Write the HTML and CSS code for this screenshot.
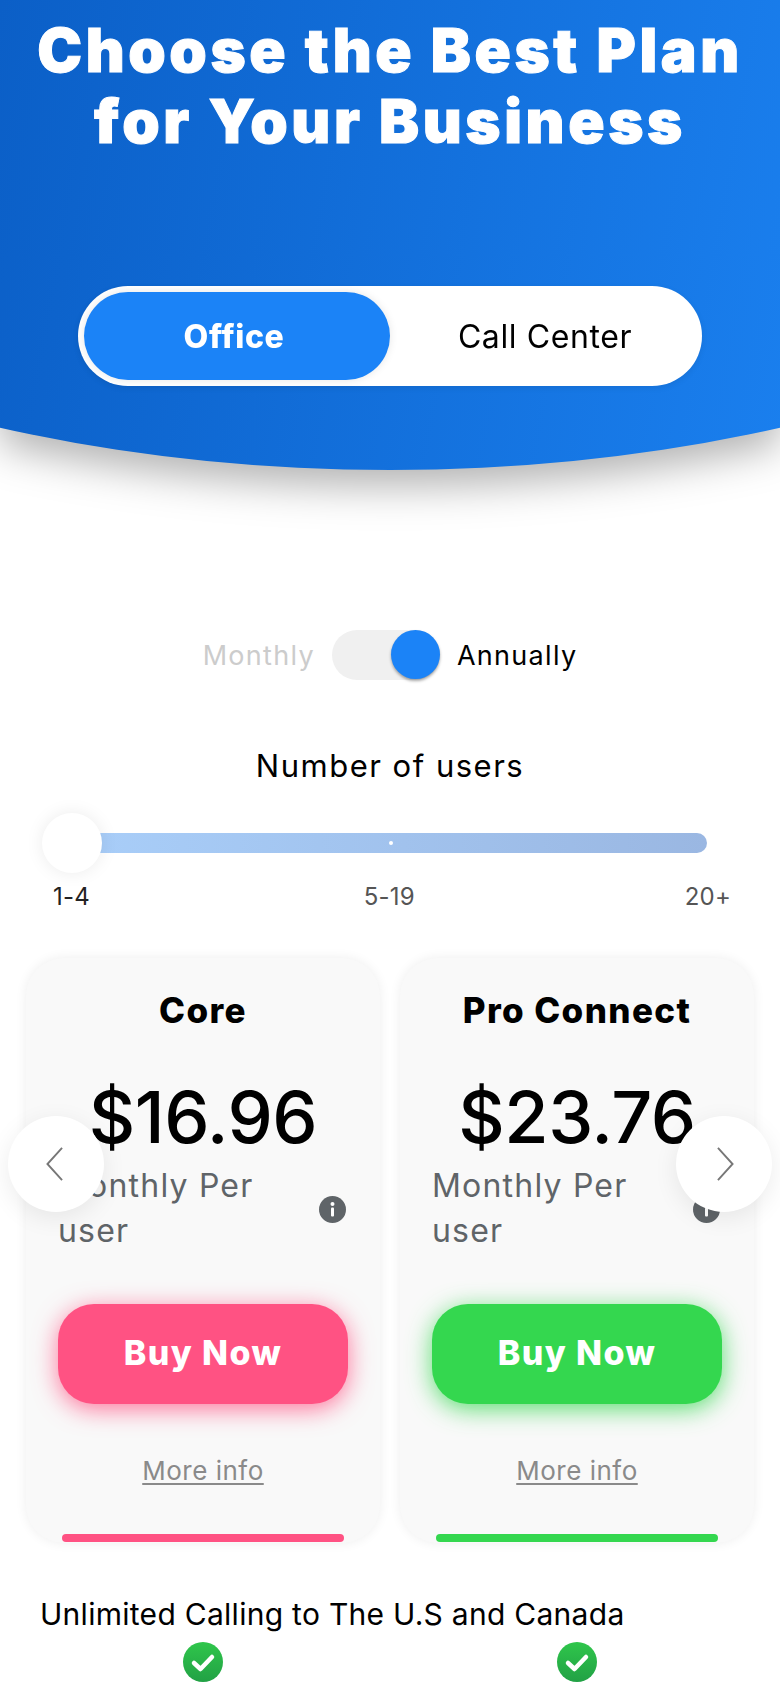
FILE: index.html
```html
<!DOCTYPE html>
<html lang="en">
<head>
<meta charset="utf-8">
<title>Choose the Best Plan</title>
<link rel="stylesheet" href="styles.css">
</head>
<body>
<div class="hero-wrap">
  <header class="hero">
    <h1 class="hero-title">Choose the Best Plan<br>for Your Business</h1>
    <div class="segment">
      <div class="segment-item segment-active">Office</div>
      <div class="segment-item segment-plain">Call Center</div>
    </div>
  </header>
</div>

<div class="billing">
  <span class="billing-off">Monthly</span>
  <div class="switch"><div class="switch-knob"></div></div>
  <span class="billing-on">Annually</span>
</div>

<h2 class="users-title">Number of users</h2>
<div class="slider">
  <div class="slider-track">
    <div class="slider-handle"></div>
    <div class="slider-dot"></div>
  </div>
</div>
<div class="slider-labels">
  <span class="label-first">1-4</span>
  <span>5-19</span>
  <span>20+</span>
</div>

<section class="plans">
  <article class="card">
    <h3 class="card-title">Core</h3>
    <div class="card-price">$16.96</div>
    <div class="card-desc">
      <p class="card-desc-text">Monthly Per user</p>
      <svg class="info" viewBox="0 0 27 27"><circle cx="13.5" cy="13.5" r="13.5" fill="#5f6468"/><circle cx="13.5" cy="8" r="2" fill="#fff"/><rect x="12" y="11.5" width="3" height="9" rx="1" fill="#fff"/></svg>
    </div>
    <a class="buy buy-pink">Buy Now</a>
    <a class="more">More info</a>
    <div class="card-bar bar-pink"></div>
  </article>
  <article class="card">
    <h3 class="card-title">Pro Connect</h3>
    <div class="card-price">$23.76</div>
    <div class="card-desc">
      <p class="card-desc-text">Monthly Per user</p>
      <svg class="info" viewBox="0 0 27 27"><circle cx="13.5" cy="13.5" r="13.5" fill="#5f6468"/><circle cx="13.5" cy="8" r="2" fill="#fff"/><rect x="12" y="11.5" width="3" height="9" rx="1" fill="#fff"/></svg>
    </div>
    <a class="buy buy-green">Buy Now</a>
    <a class="more">More info</a>
    <div class="card-bar bar-green"></div>
  </article>
  <button class="arrow arrow-left" aria-label="Previous">
    <svg viewBox="0 0 18 36" class="arrow-icon"><path d="M17 1 1.5 18 17 35" fill="none" stroke="#777" stroke-width="2"/></svg>
  </button>
  <button class="arrow arrow-right" aria-label="Next">
    <svg viewBox="0 0 18 36" class="arrow-icon"><path d="M1 1 16.500 18 1 35" fill="none" stroke="#777" stroke-width="2"/></svg>
  </button>
</section>

<p class="feature">Unlimited Calling to The U.S and Canada</p>
<div class="feature-checks">
  <svg class="check" viewBox="0 0 40 40"><defs><linearGradient id="g1" x1="0" y1="0" x2="0" y2="1"><stop offset="0" stop-color="#2fc64b"/><stop offset="1" stop-color="#22a145"/></linearGradient></defs><circle cx="20" cy="20" r="20" fill="url(#g1)"/><path d="M11 21l6.500 6L29 15" fill="none" stroke="#fff" stroke-width="4.500" stroke-linecap="round" stroke-linejoin="round"/></svg>
  <svg class="check" viewBox="0 0 40 40"><circle cx="20" cy="20" r="20" fill="url(#g1)"/><path d="M11 21l6.500 6L29 15" fill="none" stroke="#fff" stroke-width="4.500" stroke-linecap="round" stroke-linejoin="round"/></svg>
</div>
</body>
</html>
```
FILE: styles.css
```css
* { box-sizing: border-box; }
html, body { margin: 0; padding: 0; }
body {
  width: 780px;
  height: 1688px;
  overflow: hidden;
  background: #fff;
  color: #000;
  font-family: Inter, "Liberation Sans", sans-serif;
}
h1, h2, h3, p { margin: 0; font-weight: normal; }

.hero-wrap { filter: drop-shadow(0 16px 20px rgba(0, 0, 0, .3)); }
.hero {
  height: 470px;
  padding-top: 15px;
  background: linear-gradient(100deg, #0b5fc7 0%, #1a7fee 100%);
  clip-path: ellipse(940px 470px at 50% 0);
}
.hero-title {
  font-size: 60px;
  line-height: 71px;
  font-weight: 900;
  color: #fff;
  text-align: center;
  letter-spacing: 3.6px;
  -webkit-text-stroke: 1px #fff;
}
.segment {
  display: flex;
  width: 624px;
  height: 100px;
  margin: 129px 0 0 78px;
  padding: 6px;
  background: #fff;
  border-radius: 50px;
  box-shadow: 0 2px 6px rgba(0, 0, 0, .08);
}
.segment-item {
  flex: 1;
  display: flex;
  align-items: center;
  justify-content: center;
  font-size: 32px;
  letter-spacing: .6px;
}
.segment-plain { padding-left: 4px; }
.segment-active {
  flex: 0 0 306px;
  padding-right: 6px;
  background: #1b83f7;
  color: #fff;
  font-weight: 800;
  border-radius: 44px;
  box-shadow: 0 0 8px rgba(0, 0, 0, .1);
}

.billing {
  display: flex;
  align-items: center;
  justify-content: center;
  gap: 17px;
  height: 50px;
  margin-top: 160px;
  font-size: 27px;
  letter-spacing: 1.3px;
}
.billing-off { color: #ccc; }
.switch {
  display: flex;
  justify-content: flex-end;
  width: 108px;
  height: 50px;
  background: #f0f0f0;
  border-radius: 25px;
}
.switch-knob {
  width: 49px;
  height: 49px;
  background: #1b83f7;
  border-radius: 50%;
  box-shadow: 0 2px 3px rgba(0, 0, 0, .35);
}

.users-title {
  margin-top: 68px;
  font-size: 31px;
  line-height: 36px;
  letter-spacing: 1.5px;
  text-align: center;
}
.slider {
  display: flex;
  align-items: center;
  height: 60px;
  margin: 29px 73px 0 100px;
}
.slider-track {
  position: relative;
  width: 100%;
  height: 20px;
  background: linear-gradient(90deg, #a8cdf8, #9ab7e2);
  border-radius: 0 10px 10px 0;
}
.slider-handle {
  position: absolute;
  left: -58px;
  top: -20px;
  width: 60px;
  height: 60px;
  background: #fff;
  border-radius: 50%;
  box-shadow: 0 0 18px rgba(0, 0, 0, .08);
}
.slider-dot {
  position: absolute;
  left: 289px;
  top: 8px;
  width: 4px;
  height: 4px;
  background: #fff;
  border-radius: 50%;
}
.slider-labels {
  display: flex;
  justify-content: space-between;
  margin-top: 9px;
  padding: 0 49px 0 53px;
  font-size: 24px;
  line-height: 30px;
  letter-spacing: .2px;
  color: #555;
}
.label-first { margin-right: 4px; color: #222; }

.plans {
  position: relative;
  display: grid;
  grid-template-columns: 354px 354px;
  gap: 20px;
  margin-top: 46px;
  padding: 0 26px;
}
.card {
  display: flex;
  flex-direction: column;
  height: 585px;
  padding: 31px 32px 1px;
  background: #f9f9f9;
  border-radius: 38px;
  box-shadow: 0 0 12px rgba(0, 0, 0, .07);
}
.card-title {
  font-size: 35px;
  line-height: 42px;
  font-weight: 800;
  letter-spacing: 1.4px;
  text-align: center;
}
.card-price {
  margin-top: 42px;
  font-size: 72px;
  line-height: 88px;
  font-weight: 500;
  letter-spacing: -.5px;
  text-align: center;
}
.card-desc {
  display: flex;
  align-items: center;
  justify-content: space-between;
  margin-top: 2px;
  padding-right: 2px;
}
.card-desc-text {
  width: 230px;
  font-size: 32px;
  line-height: 45px;
  letter-spacing: 1.2px;
  color: #5f6468;
}
.info { width: 27px; height: 27px; margin-top: 2px; }
.buy {
  display: flex;
  align-items: center;
  justify-content: center;
  height: 100px;
  margin-top: 51px;
  padding-bottom: 4px;
  color: #fff;
  font-size: 34px;
  font-weight: 800;
  letter-spacing: 1.4px;
  border-radius: 36px;
}
.buy-pink { background: #ff5283; box-shadow: 0 5px 24px rgba(255, 82, 131, .8); }
.buy-green { background: #34d74f; box-shadow: 0 5px 24px rgba(52, 215, 79, .8); }
.more {
  margin-top: 51px;
  font-size: 26px;
  line-height: 32px;
  letter-spacing: .5px;
  color: #8a8a8a;
  text-align: center;
  text-decoration: underline;
  text-decoration-thickness: 2px;
  text-underline-offset: 3px;
}
.card-bar {
  height: 8px;
  margin: 47px 4px 0;
  border-radius: 4px;
}
.bar-pink { background: #ff5283; }
.bar-green { background: #34d74f; }

.arrow {
  position: absolute;
  top: 158px;
  display: flex;
  align-items: center;
  justify-content: center;
  width: 96px;
  height: 96px;
  padding: 0;
  background: #fff;
  border: 0;
  border-radius: 50%;
  box-shadow: 0 6px 24px rgba(0, 0, 0, .08);
}
.arrow-left { left: 8px; padding-right: 3px; }
.arrow-right { right: 8px; padding-left: 2px; }
.arrow-icon { width: 17px; height: 34px; }

.feature {
  margin-top: 53px;
  padding-left: 40px;
  font-size: 30px;
  line-height: 36px;
  letter-spacing: .28px;
}
.feature-checks {
  display: grid;
  grid-template-columns: 354px 354px;
  gap: 20px;
  margin-top: 10px;
  padding: 0 26px;
  justify-items: center;
}
.check { width: 40px; height: 40px; }
```
